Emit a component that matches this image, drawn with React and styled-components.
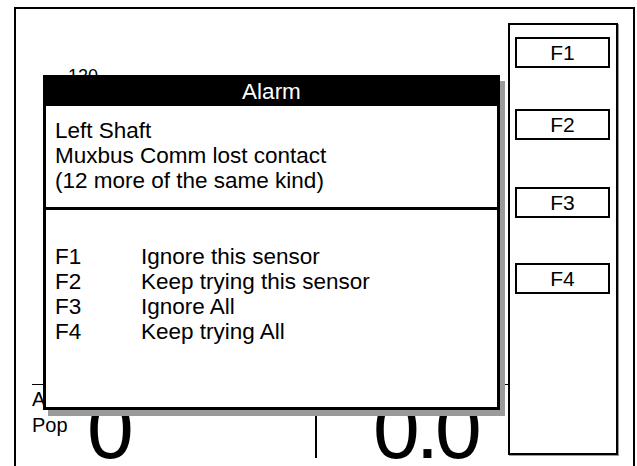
import React from "react";
import styled, { createGlobalStyle } from "styled-components";

const Global = createGlobalStyle`
  html, body { margin: 0; padding: 0; background: #fff; overflow: hidden; }
  body { font-family: "Liberation Sans", Arial, Helvetica, sans-serif; color: #000; }
`;

const Frame = styled.div`
  position: relative;
  box-sizing: border-box;
  margin: 7px 0 0 14px;
  width: 621px;
  height: 480px;
  border: 2px solid #000;
  display: flex;
`;

const Screen = styled.div`
  width: 492px;
  display: flex;
  flex-direction: column;
`;

const ScaleLabel = styled.div`
  margin: 57px 0 0 52px;
  font-size: 18px;
  line-height: 20px;
`;

const Readout = styled.div`
  margin: 298px 0 0 16px;
  border-top: 1px solid #000;
  display: flex;
  height: 78px;
`;

const Cell = styled.div`
  width: ${(p) => p.$width}px;
  padding-left: ${(p) => p.$pad || 0}px;
  display: flex;
  align-items: flex-start;
  box-sizing: border-box;
`;

const Labels = styled.div`
  width: 51px;
  padding-top: 1px;
  font-size: 20px;
  line-height: 26px;
`;

const BigValue = styled.div`
  margin-top: 11px;
  padding-left: ${(p) => p.$shift || 0}px;
  font-size: 84px;
  line-height: 66px;
  letter-spacing: ${(p) => p.$tight || 0}px;
`;

const Divider = styled.div`
  width: 2px;
  margin-top: 4px;
  height: 69px;
  background: #000;
`;

const KeyPanel = styled.div`
  box-sizing: border-box;
  margin-top: 14px;
  width: 110px;
  height: 432px;
  border: 2px solid #000;
  box-shadow: 1px 1px 0 #9a9a9a;
  display: flex;
  flex-direction: column;
  padding-left: 5px;
`;

const KeyButton = styled.div`
  box-sizing: border-box;
  margin-top: ${(p) => p.$gap}px;
  width: 95px;
  height: 31px;
  border: 2px solid #000;
  display: flex;
  align-items: center;
  justify-content: center;
  font-size: 21px;
  line-height: 27px;
`;

const Dialog = styled.div`
  position: absolute;
  left: 27px;
  top: 66px;
  box-sizing: border-box;
  width: 457px;
  height: 335px;
  border: 3px solid #000;
  background: #fff;
  box-shadow: 5px 6px 0 #9a9a9a;
  font-size: 22.5px;
  line-height: 25px;
`;

const TitleBar = styled.div`
  height: 28px;
  background: #000;
  color: #fff;
  text-align: center;
  line-height: 28px;
`;

const Message = styled.div`
  padding: 12px 9px 14px;
  border-bottom: 3px solid #000;
`;

const Options = styled.div`
  padding: 34px 9px 0;
  display: grid;
  grid-template-columns: 86px auto;
`;

const keys = [
  { label: "F1", gap: 12 },
  { label: "F2", gap: 41 },
  { label: "F3", gap: 47 },
  { label: "F4", gap: 45 },
];

const options = [
  ["F1", "Ignore this sensor"],
  ["F2", "Keep trying this sensor"],
  ["F3", "Ignore All"],
  ["F4", "Keep trying All"],
];

export default function App() {
  return (
    <>
      <Global />
      <Frame>
        <Screen>
          <ScaleLabel>120</ScaleLabel>
          <Readout>
            <Cell $width={283}>
              <Labels>
                <div>A</div>
                <div>Pop</div>
              </Labels>
              <BigValue $shift={4}>0</BigValue>
            </Cell>
            <Divider />
            <Cell $width={190} $pad={56}>
              <BigValue $tight={-4}>0.0</BigValue>
            </Cell>
          </Readout>
        </Screen>
        <KeyPanel>
          {keys.map((k) => (
            <KeyButton key={k.label} $gap={k.gap}>
              {k.label}
            </KeyButton>
          ))}
        </KeyPanel>
        <Dialog>
          <TitleBar>Alarm</TitleBar>
          <Message>
            <div>Left Shaft</div>
            <div>Muxbus Comm lost contact</div>
            <div>(12 more of the same kind)</div>
          </Message>
          <Options>
            {options.map(([k, d]) => (
              <React.Fragment key={k}>
                <div>{k}</div>
                <div>{d}</div>
              </React.Fragment>
            ))}
          </Options>
        </Dialog>
      </Frame>
    </>
  );
}
